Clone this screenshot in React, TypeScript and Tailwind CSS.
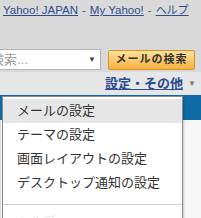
const font = { fontFamily: '"Liberation Sans", "Noto Sans CJK JP", sans-serif' };

export default function App() {
  return (
    <div className="relative w-[201px] h-[218px] overflow-hidden bg-[#f4f4f4]" style={font}>
      {/* header */}
      <div className="bg-[#d9d9d9] h-[72px] flex flex-col">
        <div className="flex items-center gap-[4px] pl-[3px] pt-[3px] text-[11.5px] leading-[14px] whitespace-nowrap">
          <a className="text-[#2e4c8f] underline">Yahoo! JAPAN</a>
          <span className="text-[#555]">-</span>
          <a className="text-[#2e4c8f] underline">My Yahoo!</a>
          <span className="text-[#555]">-</span>
          <a className="text-[#2e4c8f] underline text-[11px]">ヘルプ</a>
        </div>
        <div className="flex items-center mt-[32px] gap-[7px]">
          <div className="w-[101px] h-[21px] bg-white border border-[#b5b5b5] border-l-0 flex items-center justify-between pr-[4px] overflow-hidden">
            <span className="text-[13px] text-[#9a9a9a] whitespace-nowrap -ml-[9px]">検索...</span>
            <span className="text-[8px] text-[#444]">▼</span>
          </div>
          <button className="w-[87px] h-[20px] rounded-[2px] border border-[#d2942a] bg-gradient-to-b from-[#fde29a] to-[#f6b23a] text-[11px] font-bold text-[#333] tracking-[1px] leading-none">
            メールの検索
          </button>
        </div>
      </div>
      <div className="h-[23px] bg-[#e6e6e6] flex items-center justify-end pr-[5px] gap-[5px]">
        <a className="text-[13px] font-bold text-[#2e4c8f] underline whitespace-nowrap">設定・その他</a>
        <span className="text-[8px] text-[#777]">▼</span>
      </div>
      {/* blue bar behind menu */}
      <div className="h-[25px] bg-[#0f6aa6]" />
      <div className="h-[98px] bg-[#f7f7f7] border-l border-[#ddd]" />

      {/* dropdown menu */}
      <div className="absolute left-[2px] top-[96px] w-[181px] h-[130px] bg-white border border-[#8c8c8c] shadow-[1px_1px_2px_rgba(0,0,0,0.2)] pt-[2px]">
        <ul className="text-[13px] text-[#333] leading-[24px]">
          <li className="bg-[#e6e6e6] pl-[14px] h-[24px]">メールの設定</li>
          <li className="pl-[14px] h-[24px]">テーマの設定</li>
          <li className="pl-[14px] h-[24px]">画面レイアウトの設定</li>
          <li className="pl-[14px] h-[24px]">デスクトップ通知の設定</li>
        </ul>
        <div className="mt-[9px] border-t border-[#d0d0d0]" />
        <div className="pl-[14px] pt-[6px] text-[13px] text-[#ececec]">ヘルプ</div>
      </div>
    </div>
  );
}
